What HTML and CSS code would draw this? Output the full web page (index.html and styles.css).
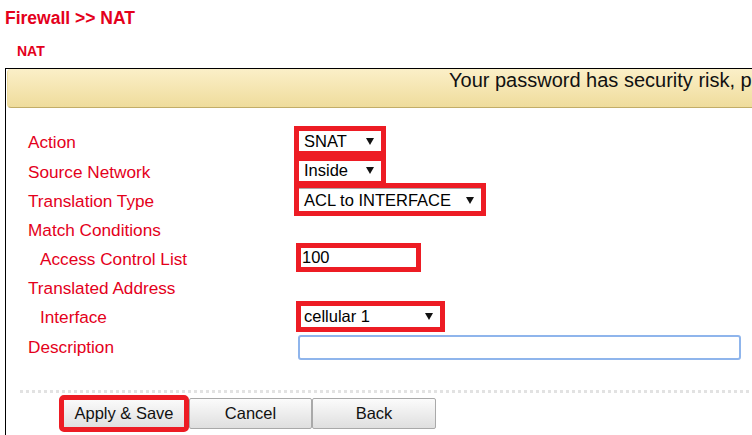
FILE: index.html
```html
<!DOCTYPE html>
<html lang="en">
<head>
    <meta charset="UTF-8">
    <meta name="viewport" content="width=device-width, initial-scale=1.0">
    <title>Firewall - NAT</title>
    <link rel="stylesheet" href="styles.css">
</head>
<body>
    <h1 class="page-title">Firewall &gt;&gt; NAT</h1>
    <h2 class="sub-title">NAT</h2>

    <div class="panel">
        <div class="banner">Your password has security risk, please change it.</div>

        <div class="form">
            <div class="label">Action</div>
            <div class="ctl">
                <div class="sel hl sel-action"><span>SNAT</span><svg width="8" height="7" viewBox="0 0 8 7"><polygon points="0,0 8,0 4,7"/></svg></div>
            </div>

            <div class="label">Source Network</div>
            <div class="ctl">
                <div class="sel hl sel-action"><span>Inside</span><svg width="8" height="7" viewBox="0 0 8 7"><polygon points="0,0 8,0 4,7"/></svg></div>
            </div>

            <div class="label">Translation Type</div>
            <div class="ctl">
                <div class="sel hl sel-type"><span>ACL to INTERFACE</span><svg width="8" height="7" viewBox="0 0 8 7"><polygon points="0,0 8,0 4,7"/></svg></div>
            </div>

            <div class="label">Match Conditions</div>
            <div class="ctl"></div>

            <div class="label sub">Access Control List</div>
            <div class="ctl">
                <input class="text hl text-acl" type="text" value="100">
            </div>

            <div class="label">Translated Address</div>
            <div class="ctl"></div>

            <div class="label sub">Interface</div>
            <div class="ctl">
                <div class="sel hl sel-iface"><span>cellular 1</span><svg width="8" height="7" viewBox="0 0 8 7"><polygon points="0,0 8,0 4,7"/></svg></div>
            </div>

            <div class="label">Description</div>
            <div class="ctl">
                <input class="text text-desc" type="text" value="">
            </div>
        </div>

        <div class="dots"></div>

        <div class="buttons">
            <button class="btn btn-apply hl">Apply &amp; Save</button>
            <button class="btn btn-cancel">Cancel</button>
            <button class="btn btn-back">Back</button>
        </div>
    </div>
</body>
</html>
```

FILE: styles.css
```css
/* dasar halaman */
body {
    margin: 0;
    font-family: "Liberation Sans", Arial, sans-serif;
    color: #000;
    overflow: hidden;
    height: 435px;
}

.page-title {
    margin: 0;
    padding: 8px 5px 0;
    font-size: 17.5px;
    line-height: 20px;
    font-weight: bold;
    color: #e4001b;
}

.sub-title {
    margin: 14px 0 0;
    padding-left: 17px;
    font-size: 14px;
    line-height: 18px;
    font-weight: bold;
    color: #e4001b;
}

/* kotak utama */
.panel {
    margin: 8px 0 0 5px;
    width: 1200px;
    height: 600px;
    border: 1px solid #000;
}

.banner {
    margin: 0 1px;
    height: 38px;
    padding-left: 441px;
    background: linear-gradient(#fbefc8, #efdc9c);
    border: 1px solid #eedc9e;
    border-top: 0;
    border-bottom-color: #c2ad68;
    border-radius: 4px;
    font-size: 20px;
    line-height: 23px;
    color: #111;
    white-space: nowrap;
}

/* form */
.form {
    display: grid;
    grid-template-columns: 271px auto;
    grid-template-rows: 30px 29px 29px 29px 29px 30px 27px 34px;
    align-items: center;
    padding: 18px 0 0 22px;
}

.label {
    padding-top: 2px;
    font-size: 17.2px;
    line-height: 20px;
    color: #e4001b;
    white-space: nowrap;
}
.label.sub {
    padding-left: 12px;
}

.ctl {
    display: flex;
    align-items: center;
}

/* garis merah penanda */
.hl {
    outline: 5px solid #ed1c24;
}

.sel {
    display: flex;
    align-items: center;
    justify-content: space-between;
    box-sizing: border-box;
    padding: 0 7px 0 5px;
    background: #fff;
    font-size: 16.5px;
}
.sel svg {
    fill: #111;
}
.sel-action {
    width: 82px;
    height: 20px;
}
.sel-type {
    width: 182px;
    height: 23px;
    border-top: 1px solid #aaa;
}
.sel-iface {
    width: 139px;
    height: 21px;
    margin: 2px 0 0 2px;
    padding-left: 3px;
}

.text {
    box-sizing: border-box;
    margin: 0;
    font-family: "Liberation Sans", Arial, sans-serif;
    font-size: 16.5px;
    color: #000;
}
.text-acl {
    width: 115px;
    height: 19px;
    margin-left: 2px;
    padding: 0 1px;
    border: 0;
}
.text-desc {
    width: 443px;
    height: 25px;
    margin: 3px 0 0 -1px;
    border: 2px solid #8fb5ec;
    border-radius: 3px;
}

.dots {
    height: 3px;
    margin: 27px 0 0 14px;
    background: repeating-linear-gradient(90deg, #e2e2e2 0 3px, transparent 3px 6px);
}

/* tombol */
.buttons {
    display: flex;
    padding: 5px 0 0 56px;
}
.btn {
    height: 31px;
    margin: 0;
    padding: 0;
    border: 1px solid #a9a9a9;
    border-radius: 2px;
    background: linear-gradient(#fbfbfb, #dfdfdf);
    font-family: "Liberation Sans", Arial, sans-serif;
    font-size: 16.5px;
    color: #111;
}
.btn-apply {
    width: 124px;
    margin-right: 3px;
    outline-offset: -2px;
}
.btn-cancel {
    width: 123px;
}
.btn-back {
    width: 124px;
}
```
